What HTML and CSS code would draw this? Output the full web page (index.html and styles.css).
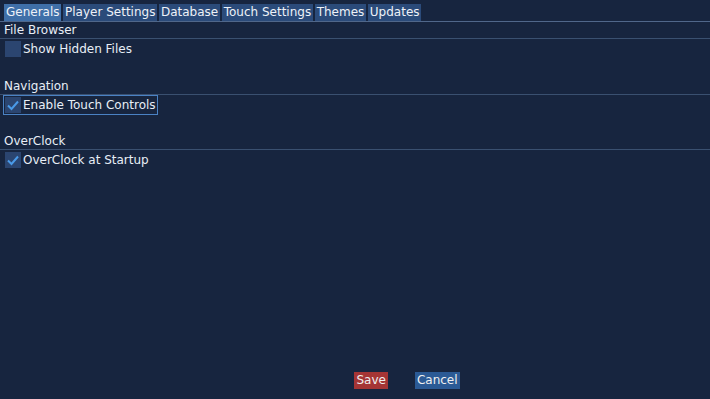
FILE: index.html
```html
<!DOCTYPE html>
<html lang="en">
<head>
  <meta charset="UTF-8">
  <title>Settings</title>
  <link rel="stylesheet" href="styles.css">
</head>
<body>
  <div class="window">
    <div class="tabs">
      <span class="tab active">Generals</span>
      <span class="tab">Player Settings</span>
      <span class="tab">Database</span>
      <span class="tab">Touch Settings</span>
      <span class="tab">Themes</span>
      <span class="tab">Updates</span>
    </div>

    <div class="page">
      <div class="group">
        <div class="group-title">File Browser</div>
        <label class="option">
          <span class="box"></span>
          <span>Show Hidden Files</span>
        </label>
      </div>

      <div class="group">
        <div class="group-title">Navigation</div>
        <label class="option focused">
          <span class="box checked">
            <svg viewBox="0 0 16 16" width="16" height="16"><path d="M3 8.5 L6.5 12 L13 4.5" fill="none" stroke="#4a9ae8" stroke-width="2"/></svg>
          </span>
          <span>Enable Touch Controls</span>
        </label>
      </div>

      <div class="group">
        <div class="group-title">OverClock</div>
        <label class="option">
          <span class="box checked">
            <svg viewBox="0 0 16 16" width="16" height="16"><path d="M3 8.5 L6.5 12 L13 4.5" fill="none" stroke="#4a9ae8" stroke-width="2"/></svg>
          </span>
          <span>OverClock at Startup</span>
        </label>
      </div>
    </div>

    <div class="buttons">
      <button class="btn save">Save</button>
      <button class="btn cancel">Cancel</button>
    </div>
  </div>
</body>
</html>
```

FILE: styles.css
```css
* {
  margin: 0;
  padding: 0;
  box-sizing: border-box;
}

body {
  font-family: "DejaVu Sans", sans-serif;
  font-size: 12px;
  background-color: #17253f;
  color: #e8eef6;
  width: 710px;
  height: 399px;
  overflow: hidden;
}

.window {
  height: 399px;
  display: flex;
  flex-direction: column;
}

.tabs {
  display: flex;
  gap: 2px;
  padding: 4px 0 0 4px;
  border-bottom: 1px solid #50678a;
}

.tab {
  background: #2b4b7a;
  padding: 1px 1.5px 2px 2px;
  line-height: 14px;
  color: #eef2f8;
}

.tab.active {
  background: #3f6fa8;
}

.page {
  flex: 1;
}

.group {
  margin-bottom: 19px;
}

.group:nth-child(2) {
  margin-bottom: 18px;
}

.group-title {
  padding: 1px 4px 0;
  height: 17px;
  line-height: 15px;
  border-bottom: 1px solid #3a5070;
}

.option {
  display: flex;
  align-items: center;
  gap: 2px;
  margin: 0 0 0 3px;
  padding: 1px;
  height: 20px;
  width: fit-content;
  border: 1px solid transparent;
}

.option.focused {
  border-color: #4a82c4;
}

.box {
  width: 16px;
  height: 16px;
  background: #2b4570;
  display: flex;
}

.buttons {
  display: flex;
  justify-content: center;
  gap: 27px;
  padding: 0 0 10px 104px;
}

.btn {
  font: inherit;
  font-size: 12px;
  color: #f0f0f0;
  border: none;
  padding: 1px 2px 2px;
  line-height: 14px;
}

.btn.save {
  background: #a53535;
}

.btn.cancel {
  background: #2b5a95;
}
```
